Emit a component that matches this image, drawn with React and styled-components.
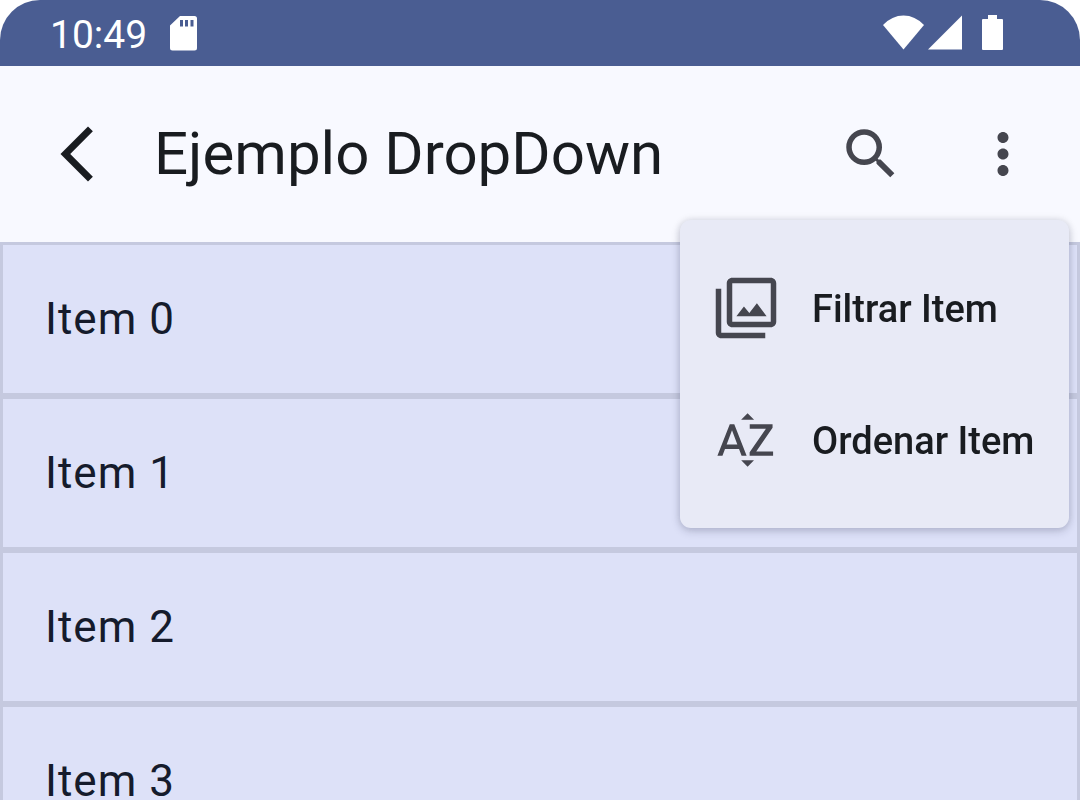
import React from "react";
import styled, { createGlobalStyle } from "styled-components";
import {
  MdArrowBackIosNew,
  MdFilter,
  MdMoreVert,
  MdSearch,
  MdSortByAlpha,
} from "react-icons/md";

const GlobalStyle = createGlobalStyle`
  *, *::before, *::after { box-sizing: border-box; }
  body {
    margin: 0;
    background: #ffffff;
    font-family: Roboto, "Liberation Sans", sans-serif;
    color: #191c20;
  }
`;

const Screen = styled.div`
  display: flex;
  flex-direction: column;
  height: 100vh;
  overflow: hidden;
`;

const StatusBar = styled.div`
  display: flex;
  flex: none;
  align-items: center;
  justify-content: space-between;
  height: 66px;
  padding: 0 76px 0 50px;
  border-radius: 40px 40px 0 0;
  background: #4a5d92;
  color: #ffffff;
`;

const StatusGroup = styled.div`
  display: flex;
  align-items: center;
  gap: ${(p) => p.$gap}px;

  svg {
    display: block;
    fill: currentColor;
  }
`;

const Clock = styled.time`
  font-size: 39px;
  line-height: 44px;
  padding-top: 4px;
`;

const AppBar = styled.header`
  position: relative;
  z-index: 1;
  display: flex;
  flex: none;
  align-items: center;
  height: 176px;
  padding: 0 11px;
  background: #f8f9ff;
`;

const Title = styled.h1`
  flex: 1;
  margin: 0;
  padding: 0 11px;
  font-size: 60px;
  line-height: 76px;
  font-weight: 400;
`;

const IconButton = styled.button`
  display: flex;
  align-items: center;
  justify-content: center;
  width: 132px;
  height: 132px;
  padding: 0;
  border: 0;
  border-radius: 50%;
  background: transparent;
  color: ${(p) => (p.$strong ? "#191c20" : "#45464f")};
  font-size: 66px;
  cursor: pointer;
`;

const MenuAnchor = styled.div`
  position: relative;
`;

const Menu = styled.div`
  position: absolute;
  top: 100%;
  right: 0;
  min-width: 389px;
  padding: 22px 0;
  border-radius: 11px;
  background: #e8eaf6;
  box-shadow: 0 3px 10px rgba(20, 25, 60, 0.2), 0 0 8px rgba(20, 25, 60, 0.1);
`;

const MenuItem = styled.button`
  display: flex;
  align-items: center;
  gap: 33px;
  width: 100%;
  height: 132px;
  padding: 0 33px;
  border: 0;
  background: transparent;
  color: #191c20;
  font: 500 38px/56px Roboto, "Liberation Sans", sans-serif;
  white-space: nowrap;
  cursor: pointer;

  svg {
    flex: none;
    width: 66px;
    height: 66px;
    color: #45464f;
  }
`;

const MenuLabel = styled.span`
  padding-top: 2px;
`;

const List = styled.ul`
  flex: 1;
  min-height: 0;
  margin: 0;
  padding: 0;
  list-style: none;
  overflow-y: auto;
  scrollbar-width: none;
`;

const ListItem = styled.li`
  display: flex;
  align-items: center;
  height: 154px;
  padding: 0 42px;
  border: 3px solid #c5c9df;
  background: #dde1f8;
  color: #151b2c;
  font-size: 44px;
  line-height: 66px;
  letter-spacing: 1px;
`;

const items = ["Item 0", "Item 1", "Item 2", "Item 3"];

const actions = [
  { label: "Filtrar Item", Icon: MdFilter },
  { label: "Ordenar Item", Icon: MdSortByAlpha },
];

const SdCardIcon = () => (
  <svg width="28" height="36" viewBox="0 0 28 36" aria-hidden="true">
    <path
      fillRule="evenodd"
      d="M10 1H24.500Q27 1 27 3.500V33Q27 35.500 24.500 35.500H2.500Q0 35.500 0 33V10.500ZM10 5V11.500H13V5ZM15 5V11.500H18V5ZM20.500 5V11.500H23.500V5Z"
    />
  </svg>
);

const WifiIcon = () => (
  <svg width="42" height="36" viewBox="0 0 42 36" aria-hidden="true">
    <path d="M0 10Q9 0.500 20.500 0.500T41 10L20.500 34.500Z" />
  </svg>
);

const SignalIcon = () => (
  <svg width="34" height="36" viewBox="0 0 34 36" aria-hidden="true">
    <path d="M34 0.500V34.500H0Z" />
  </svg>
);

const BatteryIcon = () => (
  <svg width="22" height="36" viewBox="0 0 22 36" aria-hidden="true">
    <path d="M6 0H15V4H20Q21 4 21 5V34Q21 35 20 35H1Q0 35 0 34V5Q0 4 1 4H6Z" />
  </svg>
);

export default function App() {
  return (
    <>
      <GlobalStyle />
      <Screen>
        <StatusBar>
          <StatusGroup $gap={23}>
            <Clock>10:49</Clock>
            <SdCardIcon />
          </StatusGroup>
          <StatusGroup $gap={20}>
            <StatusGroup $gap={3}>
              <WifiIcon />
              <SignalIcon />
            </StatusGroup>
            <BatteryIcon />
          </StatusGroup>
        </StatusBar>
        <AppBar>
          <IconButton $strong aria-label="Volver">
            <MdArrowBackIosNew />
          </IconButton>
          <Title>Ejemplo DropDown</Title>
          <IconButton aria-label="Buscar">
            <MdSearch />
          </IconButton>
          <MenuAnchor>
            <IconButton aria-label="Más opciones" aria-haspopup="menu" aria-expanded="true">
              <MdMoreVert />
            </IconButton>
            <Menu role="menu">
              {actions.map(({ label, Icon }) => (
                <MenuItem key={label} role="menuitem">
                  <Icon aria-hidden="true" />
                  <MenuLabel>{label}</MenuLabel>
                </MenuItem>
              ))}
            </Menu>
          </MenuAnchor>
        </AppBar>
        <List>
          {items.map((item) => (
            <ListItem key={item}>{item}</ListItem>
          ))}
        </List>
      </Screen>
    </>
  );
}
